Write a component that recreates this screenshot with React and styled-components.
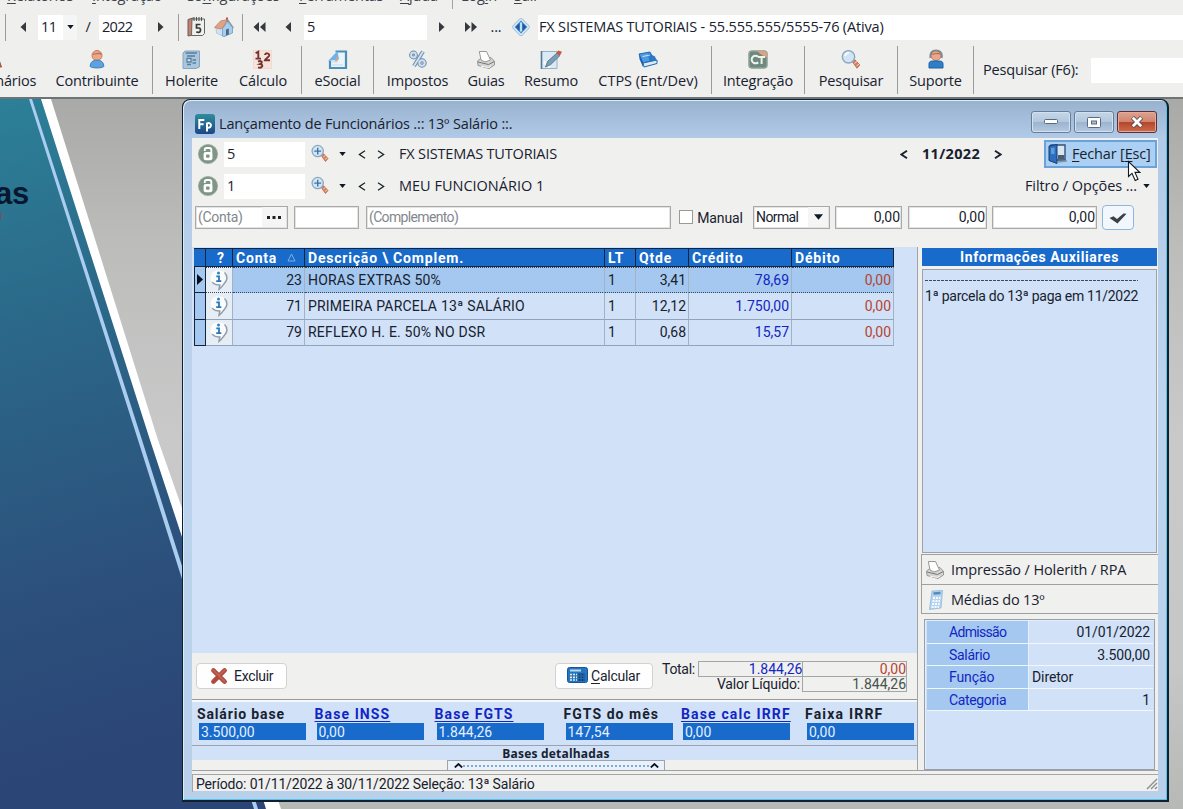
import React from "react";
import styled, { createGlobalStyle, css } from "styled-components";

const Global = createGlobalStyle`
  * { box-sizing: border-box; }
  html, body { margin: 0; padding: 0; overflow: hidden; }
  body { width: 1183px; height: 809px; background: #b8bab8; }
`;

const segoe = `"Open Sans", "Noto Sans", sans-serif`;
const sans = `Roboto, "Liberation Sans", sans-serif`;
const blue = "#186acb";
const pale = "#d0e1f8";

const Screen = styled.div`
  position: relative;
  width: 1183px;
  height: 809px;
  overflow: hidden;
  display: flex;
  flex-direction: column;
`;

const Ui = styled.span`
  font-family: ${segoe};
  font-size: ${(p) => p.$size || 14.5}px;
  letter-spacing: ${(p) => p.$ls ?? -0.17}px;
  font-weight: ${(p) => p.$weight || 400};
  color: #18222e;
  line-height: 20px;
  white-space: pre;
  flex: none;
`;

const Sys = styled.span`
  font-family: ${sans};
  font-size: ${(p) => p.$size || 14}px;
  letter-spacing: ${(p) => p.$ls ?? 0}px;
  font-weight: ${(p) => p.$weight || 400};
  color: ${(p) => p.$color || "#18222e"};
  line-height: 16px;
  white-space: pre;
  flex: none;
`;

const U = styled.span`
  text-decoration: underline;
  text-underline-offset: 2px;
`;

/* ---------- application bars ---------- */
const AppBars = styled.header`
  flex: none;
  height: 99px;
  background: #efefee;
  border-bottom: 2px solid #6e7375;
  display: flex;
  flex-direction: column;
`;

const MenuBar = styled.nav`
  height: 13px;
  display: flex;
  flex: none;
  overflow: hidden;
`;

const MenuItem = styled(Ui)`
  margin-left: ${(p) => p.$ml}px;
  width: ${(p) => p.$w}px;
  margin-top: -14px;
  color: #3c434a;
`;

const MenuSep = styled.i`
  width: 1px;
  height: 9px;
  background: #a3a3a3;
  margin-left: ${(p) => p.$ml}px;
`;

const NavBar = styled.div`
  height: 28px;
  display: flex;
  align-items: center;
  flex: none;
`;

const Slot = styled.div`
  margin-left: ${(p) => p.$ml || 0}px;
  width: ${(p) => p.$w}px;
  height: ${(p) => (p.$h ? `${p.$h}px` : "auto")};
  flex: none;
  display: flex;
  align-items: center;
  justify-content: center;
  svg { display: block; flex: none; }
`;

const Sep = styled.i`
  flex: none;
  width: 1px;
  height: ${(p) => p.$h}px;
  margin-left: ${(p) => p.$ml || 0}px;
  background: #9b9b9b;
`;

const Field = styled.div`
  flex: none;
  margin-left: ${(p) => p.$ml || 0}px;
  width: ${(p) => p.$w}px;
  height: 25px;
  background: #fff;
  padding-left: ${(p) => p.$pad ?? 3}px;
  display: flex;
  align-items: center;
`;

const DropPart = styled.div`
  margin-left: auto;
  width: ${(p) => p.$w || 11}px;
  align-self: stretch;
  background: #f5f5f5;
  display: flex;
  align-items: center;
  justify-content: center;
`;

const ToolBar = styled.div`
  height: 56px;
  display: flex;
  flex: none;
  padding-top: 5px;
`;

const Tool = styled.div`
  width: ${(p) => p.$w}px;
  margin-left: ${(p) => p.$ml || 0}px;
  flex: none;
  display: flex;
  flex-direction: column;
  align-items: center;
  padding-top: 3px;
  svg { display: block; height: 22px; flex: none; }
`;

const SearchBox = styled.div`
  display: flex;
  align-items: center;
  height: 48px;
  padding-left: 9px;
`;

/* ---------- desktop ---------- */
const Desktop = styled.main`
  position: relative;
  flex: 1;
  background: linear-gradient(180deg, #a9a9a8 0, #bcbdbb 20%, #c9c9c9 48%, #c6c7c7 80%, #b6b9b6 100%);
`;

const Wallpaper = styled.svg`
  position: absolute;
  left: 0;
  top: 0;
`;

const Logo = styled.div`
  position: absolute;
  left: -5px;
  top: 77px;
  font: 700 31px/36px "Liberation Sans", sans-serif;
  color: #06182f;
  letter-spacing: -0.3px;
  small {
    position: absolute;
    left: 5px;
    top: 29px;
    font-size: 10px;
    line-height: 22px;
    color: #6d5a6c;
  }
`;

/* ---------- window ---------- */
const Window = styled.section`
  position: absolute;
  left: 182px;
  top: 0;
  width: 987px;
  height: 703px;
  border: 1px solid #10202f;
  border-width: 1px 2px 2px 1px;
  border-radius: 8px 8px 0 0;
  background: linear-gradient(180deg, #98b2ce 0, #b1cae8 38px, #bcd4ee 300px, #b9d0ea 100%);
  box-shadow: inset 1px 1px 0 #d9ecfa, inset -1px -1px 0 #55c4ea;
  padding: 0 9px 9px 9px;
  display: flex;
  flex-direction: column;
`;

const TitleBar = styled.div`
  height: 38px;
  flex: none;
  display: flex;
  align-items: center;
  padding: 10px 1px 0 3px;
`;

const CaptionButtons = styled.div`
  margin-left: auto;
  align-self: flex-start;
  display: flex;
  gap: 3px;
  padding-top: 1px;
`;

const CaptionButton = styled.div`
  width: 40px;
  height: 22px;
  border: 1px solid ${(p) => (p.$close ? "#5b3035" : "#687e98")};
  border-radius: 3px;
  box-shadow: inset 0 0 0 1px ${(p) => (p.$close ? "#e5aa98" : "#d3e2f1")};
  background: ${(p) =>
    p.$close
      ? "linear-gradient(180deg,#dda38f 0,#cf8570 48%,#b3452b 50%,#cd6c4e 100%)"
      : "linear-gradient(180deg,#c5d6e8 0,#b3c8de 48%,#9bb3ce 50%,#b4cae2 100%)"};
  display: flex;
  align-items: center;
  justify-content: center;
`;

const Client = styled.div`
  flex: 1;
  min-height: 0;
  background: #f0f0ef;
  display: flex;
  flex-direction: column;
`;

const LookupRow = styled.div`
  height: ${(p) => p.$h}px;
  flex: none;
  display: flex;
  align-items: center;
  padding-left: 5px;
`;

const LookupEnd = styled.div`
  margin-left: auto;
  display: flex;
  align-items: center;
  padding-right: ${(p) => p.$pr}px;
`;

const CloseAction = styled.div`
  width: 113px;
  height: 28px;
  background: #acd0f3;
  border: 2px solid #6aa2da;
  display: flex;
  align-items: center;
  padding-left: 2px;
  gap: 4px;
`;

const EntryRow = styled.div`
  height: 45px;
  flex: none;
  display: flex;
  align-items: flex-start;
  padding: 4px 0 0 3px;
`;

const Box = styled.div`
  flex: none;
  height: 23px;
  width: ${(p) => p.$w}px;
  margin-left: ${(p) => p.$ml || 0}px;
  background: #fff;
  border: 1px solid #a9a9a9;
  box-shadow: inset 0 0 0 1px #e3e3e3;
  padding: 0 ${(p) => p.$pr ?? 1}px 1px 2px;
  display: flex;
  align-items: center;
  justify-content: ${(p) => (p.$right ? "flex-end" : "flex-start")};
`;

const Check = styled.div`
  flex: none;
  width: 14px;
  height: 14px;
  margin: 4px 0 0 8px;
  background: #fff;
  border: 1px solid #9a9a9a;
`;

const OkButton = styled.div`
  flex: none;
  width: 32px;
  height: 25px;
  margin: -1px 0 0 5px;
  border: 1px solid #8cb8de;
  border-radius: 4px;
  background: #f1f7fc;
  display: flex;
  align-items: center;
  justify-content: center;
`;

const Body = styled.div`
  height: 524px;
  flex: none;
  display: flex;
  border-bottom: 1px solid #a0a0a0;
`;

const LeftPane = styled.div`
  width: 725px;
  flex: none;
  display: flex;
  flex-direction: column;
`;

const GridArea = styled.div`
  height: 406px;
  flex: none;
  background: ${pale};
  padding: 1px 0 0 2px;
`;

const Grid = styled.div`
  width: 700px;
  background: ${pale};
`;

const gridCols = "12px 27px 72px 300px 31px 53px 103px 102px";

const GridHead = styled.div`
  display: grid;
  grid-template-columns: ${gridCols};
  height: 19px;
  background: ${blue};
  border: 1px solid #16243a;
  border-width: 1px 0 1px 0;
`;

const HeadCell = styled.div`
  border-right: 1px solid #16243a;
  padding-left: 3px;
  display: flex;
  align-items: center;
  justify-content: ${(p) => (p.$center ? "center" : "flex-start")};
`;

const GridRow = styled.div`
  display: grid;
  grid-template-columns: ${gridCols};
  height: 26.3px;
  background: ${(p) => (p.$on ? "#a4c8ef" : pale)};
`;

const Cell = styled.div`
  border-right: 1px solid #a2b1c4;
  border-bottom: 1px solid #8fa3bb;
  display: flex;
  align-items: center;
  justify-content: ${(p) => (p.$right ? "flex-end" : "flex-start")};
  padding: 0 2px 0 3px;
  ${(p) =>
    p.$on &&
    css`
      border-bottom: 1px dotted #34485e;
      border-top: 1px dotted #34485e;
    `}
`;

const Marker = styled.div`
  background: #a4c8ef;
  border: 1px solid #16243a;
  border-top: 0;
  display: flex;
  align-items: center;
  justify-content: center;
`;

const InfoCell = styled(Cell)`
  padding: 0;
  justify-content: center;
  background: #e6edf5;
`;

const ActionBar = styled.div`
  height: 47px;
  flex: none;
  display: flex;
  padding: 10px 0 0 4px;
  border-bottom: 1px solid #9a9a9a;
`;

const PushButton = styled.div`
  width: ${(p) => p.$w}px;
  height: 26px;
  flex: none;
  margin-left: ${(p) => p.$ml || 0}px;
  background: #fefefe;
  border: 1px solid #d2d2d2;
  border-radius: 4px;
  display: flex;
  align-items: center;
  padding: 0 0 1px ${(p) => p.$pl}px;
  gap: ${(p) => p.$gap}px;
`;

const Totals = styled.div`
  margin: -2px 0 0 9px;
  width: 245px;
  display: flex;
  flex-direction: column;
`;

const TotalLine = styled.div`
  height: 15.5px;
  display: flex;
  justify-content: flex-end;
  align-items: center;
`;

const TotalBox = styled.div`
  height: 16px;
  width: ${(p) => p.$w}px;
  margin-left: ${(p) => p.$ml || 0}px;
  border: 1px solid #a5a5a5;
  display: flex;
  align-items: center;
  justify-content: flex-end;
`;

const BasesRow = styled.div`
  height: 46px;
  flex: none;
  background: ${pale};
  border-bottom: 1px solid #9aa4b0;
  border-top: 2px solid #f5f8fb;
  display: flex;
  padding: 4px 0 0 5px;
`;

const BaseItem = styled.div`
  width: ${(p) => p.$w}px;
  flex: none;
  display: flex;
  flex-direction: column;
`;

const BaseValue = styled.div`
  margin-left: 2px;
  width: 107px;
  height: 17px;
  margin-top: 1px;
  background: ${blue};
  padding-left: 2px;
  display: flex;
  align-items: center;
`;

const Detail = styled.div`
  height: 14px;
  flex: none;
  background: ${pale};
  display: flex;
  justify-content: center;
  align-items: center;
  padding: 1px 0 0 3px;
`;

const Splitter = styled.div`
  margin-left: 255px;
  width: 218px;
  height: 10px;
  background: #e9f1fa;
  border: 1px solid #9ba4ad;
  border-bottom: 0;
  display: flex;
  align-items: center;
  justify-content: space-between;
  padding: 0 5px 0 6px;
`;

const Dots = styled.i`
  width: 188px;
  height: 2px;
  background: repeating-linear-gradient(90deg, #7fabdc 0 2px, transparent 2px 4px);
`;

const RightPane = styled.aside`
  flex: 1;
  border-left: 1px solid #a3a3a3;
  padding: 1px 0 0 4px;
  display: flex;
  flex-direction: column;
`;

const PaneTitle = styled.div`
  height: 18px;
  width: 235px;
  background: ${blue};
  display: flex;
  align-items: center;
  justify-content: center;
`;

const Memo = styled.div`
  margin-top: 3px;
  width: 235px;
  height: 285px;
  background: ${pale};
  border: 1px solid #9aa2aa;
  padding: 10px 0 0 2px;
  display: flex;
  flex-direction: column;
  gap: 7px;
`;

const MemoRule = styled.i`
  width: 213px;
  height: 1px;
  background: repeating-linear-gradient(90deg, #3f4c5a 0 3px, transparent 3px 4px);
`;

const SideButton = styled.div`
  width: 237px;
  height: 30px;
  flex: none;
  margin: ${(p) => (p.$last ? 0 : 1)}px 0 0 -1px;
  border: 1px solid #a0a0a0;
  border-right: 0;
  border-bottom-width: ${(p) => (p.$last ? 1 : 0)}px;
  display: flex;
  align-items: center;
  padding: ${(p) => (p.$last ? 1 : 0)}px 0 0 3px;
`;

const Facts = styled.div`
  margin: 5px 0 0 2px;
  width: 231px;
  height: 151px;
  background: ${pale};
  border: 1px solid #989fa6;
  box-shadow: inset 1px 1px 0 #e4edf9;
  padding: 1px 1px 0 2px;
`;

const Fact = styled.div`
  display: grid;
  grid-template-columns: 101px 1fr;
  height: 22.5px;
  border-bottom: 1px solid #f2f7fd;
`;

const FactKey = styled.div`
  background: #a4c8ef;
  padding-left: 22px;
  display: flex;
  align-items: center;
`;

const FactValue = styled.div`
  display: flex;
  align-items: center;
  border-left: 1px solid #e8f1fc;
  padding: 0 3px 0 3px;
  justify-content: ${(p) => (p.$right ? "flex-end" : "flex-start")};
`;

const StatusBar = styled.footer`
  margin-top: 3px;
  height: 18px;
  border: 1px solid #a6a6a6;
  border-width: 1px 0 0 1px;
  display: flex;
  align-items: center;
  justify-content: space-between;
  padding: 1px 0 0 3px;
`;

const Pointer = styled.svg`
  position: absolute;
  left: 1127px;
  top: 160px;
`;

/* ---------- drawings ---------- */
const Tri = ({ dir = "right", size = 10, double }) => {
  const w = double ? 13 : 6;
  const p = dir === "right" ? "M0 0L5.5 5L0 10Z" : "M6 0L.5 5L6 10Z";
  return (
    <svg width={w} height={size} viewBox={`0 0 ${w} 10`} fill="#35393d">
      <path d={p} />
      {double && <path d={p} transform="translate(6.5 0)" />}
    </svg>
  );
};

const Down = ({ w = 8, h = 5 }) => (
  <svg width={w} height={h} viewBox="0 0 8 5">
    <path d="M0 0H8L4 5Z" fill="#0c1a28" />
  </svg>
);

const Angle = ({ left, bold }) => (
  <svg width="8" height="9" viewBox="0 0 8 9" fill="none" stroke="#18222e" strokeWidth={bold ? 1.9 : 1.3}>
    <path d={left ? "M7 .8L1.4 4.5L7 8.2" : "M1 .8L6.6 4.5L1 8.2"} />
  </svg>
);

const CalendarIcon = () => (
  <svg width="19" height="22" viewBox="0 0 19 22">
    <path d="M1 3.5L6 2V19L1 20Z" fill="#c9806b" stroke="#655f5f" />
    <path d="M5 3H17.5V17.5L15.5 19.5H4.5Z" fill="#f0f0ec" stroke="#666" />
    <path d="M7 1V5M9.5 1V5M12 1V5M14.5 1V5" stroke="#4f5252" strokeWidth="1.1" />
    <path d="M13.5 8.5H9.5V12H12C14.2 12 14 16.5 11.3 16.3L9.2 16" fill="none" stroke="#333a40" strokeWidth="1.7" />
  </svg>
);

const HomeIcon = () => (
  <svg width="20" height="20" viewBox="0 0 20 20">
    <path d="M12 .5H14V5H12Z" fill="#b15b43" />
    <path d="M2 10.5L11 5L12 18.8L9 19.3L2.5 16Z" fill="#cfe2f4" stroke="#9dbbd4" strokeWidth=".7" />
    <path d="M8.5 11.5L13.5 4.5L18.5 10.5V16L10 19.5L8.5 18.8Z" fill="#a9cdeb" stroke="#5c93bf" strokeWidth=".7" />
    <path d="M.5 10.5L6.5 4L13.5 2.5L9 10.5L6.5 12Z" fill="#dfa287" stroke="#b9785d" strokeWidth=".7" />
    <path d="M13.4 2.3L19.4 11" stroke="#8097aa" strokeWidth="1.3" />
    <path d="M12 12.5L14.8 11.6V17.4L12 18.4Z" fill="#47698a" />
  </svg>
);

const DiamondIcon = () => (
  <svg width="20" height="20" viewBox="0 0 20 20">
    <rect x="3.5" y="3.5" width="13" height="13" rx="2" transform="rotate(45 10 10)" fill="#e2effa" stroke="#a3c2dc" />
    <path d="M10 3.2L16.5 10L10 16.8L3.5 10Z" fill="#4b90cf" />
    <path d="M8.4 6V14L4.8 10ZM11.6 6V14L15.2 10Z" fill="#1d5a9b" />
    <path d="M10 5.5V14.5" stroke="#cfe5f7" strokeWidth="1.8" />
  </svg>
);

const PersonIcon = ({ headset }) => (
  <svg width="16" height="22" viewBox="0 0 16 22">
    <circle cx="8" cy="6.5" r="5" fill="#eaa789" stroke="#c67d5e" />
    <path d="M4 5C6 5.8 10 3 12.3 5.3" fill="none" stroke="#b86e50" strokeWidth="1.2" />
    {headset && <path d="M2.4 9C1.6 3.6 4.4 1.6 8 1.6S14.6 3.6 13.6 9" fill="none" stroke="#84898d" strokeWidth="2" />}
    {headset ? (
      <path d="M1 19V14.5C1 12.5 3 12 5 12H11C13 12 15 12.5 15 14.5V19Z" fill="#2f7fc8" stroke="#1d62a4" />
    ) : (
      <path d="M1.2 17.5C1.2 13 4 11.2 8 11.2S14.8 13 14.8 17.5C13 19.4 3 19.4 1.2 17.5Z" fill="#5ba2de" stroke="#3b7ebb" />
    )}
  </svg>
);

const PersonRedIcon = () => (
  <svg width="18" height="22" viewBox="0 0 18 22">
    <path d="M2 18L9 3L12 5L16.5 18Z" fill="#b9614c" stroke="#a0523f" />
  </svg>
);

const SheetIcon = () => (
  <svg width="19" height="22" viewBox="0 0 19 22">
    <path d="M3 2H17.5V18L14 19.5H1V4Z" fill="#a9c6dd" stroke="#86a5bd" />
    <path d="M3.5 4H15M5 7H13" stroke="#557f9f" strokeWidth="1.7" />
    <path d="M5 9.5H9V13H5ZM10.5 11H14M10.5 14H14M5 15.5H9" stroke="#55809f" strokeWidth="1.3" fill="#d9e7f1" />
  </svg>
);

const NumbersIcon = () => (
  <svg width="20" height="22" viewBox="0 0 20 22" fill="none" stroke="#713431" strokeWidth="1.9">
    <rect x=".5" y="1.5" width="18" height="18" fill="#f8e3dc" stroke="#f5d9d0" strokeWidth="1" />
    <path d="M2.6 4.2L5.3 2.6V9.6M2.5 9.6H8" />
    <path d="M12 6C12 3.7 16.4 3.7 16.2 6.4C16 8.3 13 9 12 11.2H17" />
    <path d="M5 12.6C8 11 10.7 13.4 7 15C11 15.5 9.5 19.6 5 18.4" />
  </svg>
);

const ESocialIcon = () => (
  <svg width="22" height="22" viewBox="0 0 22 22">
    <path d="M8.5 2.5H19V19H3V12" fill="#e9f4fb" stroke="#4c8eb5" strokeWidth="2.2" />
    <path d="M1 12L10.5 2L12 10.5Z" fill="#6db2ec" />
    <path d="M7.5 12.5L10.5 6V12.5Z" fill="#ef9a76" />
    <path d="M5 13H11M5 16H16" stroke="#c4dbe8" />
  </svg>
);

const PercentIcon = () => (
  <svg width="20" height="22" viewBox="0 0 20 22" fill="none">
    <g stroke="#6a8baa" strokeWidth="4"><circle cx="5.5" cy="6" r="2.4" /><circle cx="14" cy="14" r="2.7" /><path d="M15 2.5L6 17" /></g>
    <g stroke="#cfe0ef" strokeWidth="2"><circle cx="5.5" cy="6" r="2.4" /><circle cx="14" cy="14" r="2.7" /><path d="M15 2.5L6 17" /></g>
  </svg>
);

const PrinterIcon = () => (
  <svg width="20" height="22" viewBox="0 0 20 22" stroke="#989898" strokeWidth="1">
    <path d="M1.5 12L6 8.5H15L18.5 12.5V16L13 19.5L2 16.5Z" fill="#d4d4d2" />
    <path d="M5 11L3.3 2.5H10.5L14.5 11L9 13Z" fill="#fff" />
    <path d="M2 13L12.5 15.5L18.3 12.5" fill="none" stroke="#777" />
    <path d="M5 17.2L12.5 18.5L15 17" fill="none" stroke="#f9f9f9" />
  </svg>
);

const NoteIcon = () => (
  <svg width="22" height="22" viewBox="0 0 22 22">
    <path d="M1.5 2.5H17V19.5H1.5Z" fill="#dceaf5" stroke="#94b1c7" />
    <path d="M1.5 2V20" stroke="#527b98" strokeWidth="1.6" />
    <path d="M4 13L10 18" stroke="#fff" strokeWidth="3" />
    <path d="M5.5 18L7.5 12.5L17 4L20 6.5L10.5 15.8Z" fill="#7b9db8" stroke="#4d6b84" strokeWidth=".8" />
    <path d="M16 4.2L18.2 1.5L22 2.8L20 6.6Z" fill="#c95844" />
  </svg>
);

const BookIcon = () => (
  <svg width="20" height="22" viewBox="0 0 20 22">
    <path d="M1 5L12 3L16 11L5 14Z" fill="#4d9be2" stroke="#2169b1" />
    <path d="M1 5L5 14V18L1.5 10Z" fill="#1b5da5" />
    <path d="M5 14L19 11V14.5L6 18Z" fill="#dbeaf6" stroke="#2467ab" />
    <path d="M10 4L17 7.5L18.5 11L11.5 13" fill="#2c78c2" />
    <path d="M4.5 7.5L12 6" stroke="#c5e1fb" />
  </svg>
);

const CtIcon = () => (
  <svg width="20" height="22" viewBox="0 0 20 22">
    <rect x=".5" y="1.5" width="19" height="18" rx="3" fill="#6e8a7c" />
    <path d="M8 1.5H16.5Q19.5 1.5 19.5 5V9L14 6Z" fill="#e3a083" />
    <rect x="1" y="2" width="18" height="17" rx="3" fill="none" stroke="#9aaba1" />
    <path d="M10 7.5C6 5.5 3.5 8 3.7 11S7 15.3 10.3 13.5M10 8H17M13.6 8V15" fill="none" stroke="#eef4f0" strokeWidth="2" />
  </svg>
);

const LensIcon = ({ plus, h = 22 }) => (
  <svg width="20" height={h} viewBox="0 0 20 22">
    <path d="M11 12.2L14 10.8L18.8 16L16 19.2Z" fill="#d9805f" stroke="#b35e42" strokeWidth=".8" />
    <path d="M13.5 14.5L16 12.5M15.5 17L18 15" stroke="#f6d7c9" />
    <circle cx="7.5" cy="7.8" r="6.2" fill="#cfe5f6" stroke="#8da6bd" strokeWidth="1.4" />
    {plus ? (
      <path d="M7.5 4V11.6M3.7 7.8H11.3" stroke="#3d73a5" strokeWidth="1.5" />
    ) : (
      <path d="M4 7A4 4 0 0 1 8 3.8" stroke="#fff" strokeWidth="1.6" fill="none" />
    )}
  </svg>
);

const LockIcon = () => (
  <svg width="20" height="20" viewBox="0 0 20 20">
    <circle cx="10" cy="10" r="9.6" fill="#7f9585" stroke="#93a698" strokeWidth=".7" />
    <path d="M6.8 7V5.6C6.8 4.6 7.6 4 8.6 4H11.4C12.5 4 13.3 4.7 13.3 5.7V15" fill="none" stroke="#fff" strokeWidth="1.9" />
    <rect x="5.6" y="8" width="8.7" height="8.2" rx="2" fill="#fff" />
    <rect x="8" y="10.6" width="3.6" height="3.2" rx="1" fill="#7f9585" />
  </svg>
);

const FpIcon = () => (
  <svg width="20" height="20" viewBox="0 0 20 20">
    <defs>
      <linearGradient id="fp" x1="0" y1="0" x2="0" y2="1">
        <stop offset="0" stopColor="#2f8d9b" />
        <stop offset="1" stopColor="#1c4888" />
      </linearGradient>
    </defs>
    <rect width="20" height="20" rx="3" fill="url(#fp)" />
    <path d="M4.3 15V6H9.3M4.3 10.3H8.6M12 17.5V8.7M12 9.5C16.7 7.5 17.6 14 12.5 13.8" fill="none" stroke="#fff" strokeWidth="2" />
  </svg>
);

const InfoIcon = () => (
  <svg width="20" height="22" viewBox="0 0 20 22">
    <path d="M8.5 1.2C13.5 .8 17.6 3.8 17.8 8C18 12 15 14.5 13 17.5L10 20.3L10.6 16C5 16.4 1.5 13.2 1.5 8.8C1.5 4.6 4.6 1.5 8.5 1.2Z" fill="#fbfcfd" />
    <path d="M15.5 3.5C19.2 7 18.3 11.5 15.5 14.2C14 15.8 12.6 18.6 10 20.3L10.8 16C7.5 16.3 5 15.2 3.2 13.3" fill="none" stroke="#929da9" strokeWidth="1.5" />
    <circle cx="9.5" cy="4" r="1.5" fill="#2d83c4" />
    <path d="M7.3 7.3H10V12M7.2 12.2H12.3" fill="none" stroke="#2778bb" strokeWidth="1.8" />
  </svg>
);

const DoorIcon = () => (
  <svg width="20" height="20" viewBox="0 0 20 20">
    <path d="M3 1H17V16H3Z" fill="#d9e6ef" stroke="#32517a" strokeWidth="1.4" />
    <path d="M10 11H16.3V15.5H10Z" fill="#4b5d70" />
    <path d="M1 2L9 .5V19.5L1 16.5Z" fill="#2a6ebd" stroke="#173b75" />
    <path d="M3 4L6.5 3.5V10L3 10Z" fill="#609bd9" />
    <path d="M9.5 18L19 17" stroke="#8196a8" strokeWidth="1.3" />
  </svg>
);

const CheckIcon = () => (
  <svg width="18" height="14" viewBox="0 0 18 14">
    <path d="M.5 7L4.5 5.2L8 8L14.5 2.5L17.5 2.8L8.5 12.5Z" fill="#3b4146" />
  </svg>
);

const DeleteIcon = () => (
  <svg width="18" height="18" viewBox="0 0 18 18">
    <path d="M3.4 3.4L14.6 14.6M14.6 3.4L3.4 14.6" stroke="#b04a3f" strokeWidth="4.6" strokeLinecap="round" />
    <path d="M3.2 3L14.6 14.4M14.8 3L8.8 8.8" stroke="#c2685b" strokeWidth="1.4" strokeLinecap="round" />
  </svg>
);

const CalcIcon = () => (
  <svg width="21" height="17" viewBox="0 0 21 17">
    <rect x=".5" y=".5" width="20" height="15" rx="2" fill="#2474c2" stroke="#17549a" />
    <path d="M3 3.5H14" stroke="#bcd9e6" strokeWidth="2" />
    <path d="M3 7.5H10M3 10.3H10M3 13H10" stroke="#e6efdb" strokeWidth="1.7" strokeDasharray="2 1" />
    <path d="M11.5 7.5H18M11.5 10.3H18M11.5 13H18" stroke="#183a60" strokeWidth="1.8" strokeDasharray="2 1" />
  </svg>
);

const PadIcon = () => (
  <svg width="14" height="20" viewBox="0 0 14 20">
    <path d="M3 1L13.5 .5L12 18L.5 19.5Z" fill="#b4d4f1" stroke="#92b8d9" strokeWidth=".8" />
    <path d="M4.5 3.5L11.5 3" stroke="#568ab8" strokeWidth="2.4" />
    <path d="M4 8H11.5M3.5 11H11M3 14H10.6M2.6 17H10" stroke="#f4faff" strokeWidth="1.8" strokeDasharray="2 1" />
  </svg>
);

const UpMark = () => (
  <svg width="9" height="5" viewBox="0 0 9 5">
    <path d="M.8 4.5L4.5 1L8.2 4.5" fill="none" stroke="#0b1520" strokeWidth="1.8" />
  </svg>
);

/* ---------- data ---------- */
const tools = [
  { t: "Funcionários", w: 96, ml: -54, I: PersonRedIcon },
  { t: "Contribuinte", w: 110, ml: 0, I: PersonIcon, sep: 1 },
  { t: "Holerite", w: 77, I: SheetIcon },
  { t: "Cálculo", w: 66, I: NumbersIcon, sep: 6 },
  { t: "eSocial", w: 71, I: ESocialIcon, sep: 1 },
  { t: "Impostos", w: 87, I: PercentIcon },
  { t: "Guias", w: 50, I: PrinterIcon },
  { t: "Resumo", w: 80, I: NoteIcon },
  { t: "CTPS (Ent/Dev)", w: 114, I: BookIcon, sep: 7, ls: 0 },
  { t: "Integração", w: 92, I: CtIcon, sep: 1 },
  { t: "Pesquisar", w: 92, I: LensIcon, sep: 1 },
  { t: "Suporte", w: 75, I: () => <PersonIcon headset />, sep: 1 },
];

const entries = [
  ["23", "HORAS EXTRAS 50%", "1", "3,41", "78,69", "0,00"],
  ["71", "PRIMEIRA PARCELA 13ª SALÁRIO", "1", "12,12", "1.750,00", "0,00"],
  ["79", "REFLEXO H. E. 50% NO DSR", "1", "0,68", "15,57", "0,00"],
];

const bases = [
  { t: "Salário base", v: "3.500,00", w: 117.5, ls: 0.85 },
  { t: "Base INSS", v: "0,00", w: 120, ls: 1.1, link: true },
  { t: "Base FGTS", v: "1.844,26", w: 129, ls: 1.1, link: true },
  { t: "FGTS do mês", v: "147,54", w: 117.5, ls: 1.05 },
  { t: "Base calc IRRF", v: "0,00", w: 124, ls: 1.15, link: true },
  { t: "Faixa IRRF", v: "0,00", w: 110, ls: 1.2 },
];

const facts = [
  ["Admissão", "01/01/2022", true, -0.7],
  ["Salário", "3.500,00", true, -0.3],
  ["Função", "Diretor", false, -0.1],
  ["Categoria", "1", true, -0.35],
];

const ink = "#1226c4";
const red = "#b8432f";

const Lookup = ({ code, name, ls }) => (
  <>
    <Slot $w={21}><LockIcon /></Slot>
    <Field $ml={6} $w={81}><Ui>{code}</Ui></Field>
    <Slot $ml={5} $w={20}><LensIcon plus h={20} /></Slot>
    <Slot $ml={8} $w={8}><Down w={7} h={4} /></Slot>
    <Slot $ml={12} $w={8}><Angle left /></Slot>
    <Slot $ml={11} $w={8}><Angle /></Slot>
    <Slot $ml={14}><Ui $ls={ls}>{name}</Ui></Slot>
  </>
);

export default function App() {
  return (
    <Screen>
      <Global />
      <AppBars>
        <MenuBar>
          <MenuItem $ml={7} $w={66}><U>R</U>elatórios</MenuItem>
          <MenuItem $ml={19} $w={70}><U>I</U>ntegração</MenuItem>
          <MenuItem $ml={23} $w={95}>Co<U>n</U>figurações</MenuItem>
          <MenuItem $ml={19} $w={82}><U>F</U>erramentas</MenuItem>
          <MenuItem $ml={19} $w={40}><U>A</U>juda</MenuItem>
          <MenuSep $ml={12} />
          <MenuItem $ml={8} $w={39}>Log<U>i</U>n</MenuItem>
          <MenuItem $ml={14} $w={24}><U>S</U>air</MenuItem>
        </MenuBar>
        <NavBar>
          <Sep $ml={5} $h={27} />
          <Slot $ml={14} $w={6}><Tri dir="left" /></Slot>
          <Field $ml={12} $w={39}><Ui $ls={-0.6}>11</Ui><DropPart $w={14}><Down w={7} h={4} /></DropPart></Field>
          <Slot $ml={7} $w={8}><Ui>/</Ui></Slot>
          <Field $ml={7} $w={47}><Ui $ls={-0.7}>2022</Ui></Field>
          <Slot $ml={12} $w={6}><Tri /></Slot>
          <Sep $ml={14} $h={27} />
          <Slot $ml={8} $w={19}><CalendarIcon /></Slot>
          <Slot $ml={8} $w={20}><HomeIcon /></Slot>
          <Sep $ml={8} $h={27} />
          <Slot $ml={10} $w={13}><Tri dir="left" double /></Slot>
          <Slot $ml={19} $w={6}><Tri dir="left" /></Slot>
          <Field $ml={13} $w={123}><Ui>5</Ui></Field>
          <Slot $ml={12} $w={6}><Tri /></Slot>
          <Slot $ml={20} $w={13}><Tri double /></Slot>
          <Slot $ml={12} $w={12}><Ui>...</Ui></Slot>
          <Slot $ml={9} $w={20}><DiamondIcon /></Slot>
          <Field $ml={7} $w={646} $pad={1}><Ui>FX SISTEMAS TUTORIAIS - 55.555.555/5555-76 (Ativa)</Ui></Field>
        </NavBar>
        <ToolBar>
          {tools.map(({ t, w, ml, I, sep, ls }) => (
            <React.Fragment key={t}>
              <Tool $w={w} $ml={ml}><I /><Ui $ls={ls}>{t}</Ui></Tool>
              {sep && <Sep $ml={sep - 1} $h={48} />}
            </React.Fragment>
          ))}
          <SearchBox>
            <Ui>Pesquisar (F6):</Ui>
            <Field $ml={13} $w={100} />
          </SearchBox>
        </ToolBar>
      </AppBars>

      <Desktop>
        <Wallpaper width="300" height="710" viewBox="0 0 300 710">
          <defs>
            <linearGradient id="sea" gradientUnits="userSpaceOnUse" x1="0" y1="0" x2="190" y2="640">
              <stop offset="0" stopColor="#2c8098" />
              <stop offset=".35" stopColor="#2b6788" />
              <stop offset=".75" stopColor="#2c4f7b" />
              <stop offset="1" stopColor="#2b4577" />
            </linearGradient>
          </defs>
          <path d="M0 0H45L155 341L270 710H0Z" fill="url(#sea)" />
          <path d="M41 0H51L158 341L183 412L281 710H266L182 438L150 341Z" fill="#fff" />
          <path d="M29 0H32L142 341L182 467L258 710H254L182 480L138 341Z" fill="#abcdf0" />
        </Wallpaper>
        <Logo>as<small>r</small></Logo>

        <Window>
          <TitleBar>
            <FpIcon />
            <Slot $ml={4}><Ui>Lançamento de Funcionários .:: 13º Salário ::.</Ui></Slot>
            <CaptionButtons>
              <CaptionButton>
                <svg width="14" height="6"><rect x=".5" y=".5" width="13" height="4" rx="1" fill="#fff" stroke="#566a82" /></svg>
              </CaptionButton>
              <CaptionButton>
                <svg width="14" height="11"><rect x=".5" y=".5" width="13" height="10" rx="1" fill="#fff" stroke="#566a82" /><rect x="4.5" y="4" width="5" height="3" fill="#a9bfd6" stroke="#566a82" /></svg>
              </CaptionButton>
              <CaptionButton $close>
                <svg width="14" height="12" viewBox="0 0 14 12"><path d="M2.5 1.5L11.5 10.5M11.5 1.5L2.5 10.5" stroke="#57454c" strokeWidth="4.4" /><path d="M2.8 1.8L11.2 10.2M11.2 1.8L2.8 10.2" stroke="#fff" strokeWidth="2.8" /></svg>
              </CaptionButton>
            </CaptionButtons>
          </TitleBar>

          <Client>
            <LookupRow $h={32}>
              <Lookup code="5" name="FX SISTEMAS TUTORIAIS" />
              <LookupEnd $pr={1}>
                <Angle left bold />
                <Slot $ml={12} $w={62}><Ui $weight={700} $ls={0.35}>11/2022</Ui></Slot>
                <Slot $ml={12} $w={8}><Angle bold /></Slot>
                <Slot $ml={42} $w={113}>
                  <CloseAction><DoorIcon /><Ui><U>F</U>echar [<U>E</U>sc]</Ui></CloseAction>
                </Slot>
              </LookupEnd>
            </LookupRow>
            <LookupRow $h={32}>
              <Lookup code="1" name="MEU FUNCIONÁRIO 1" ls={0} />
              <LookupEnd $pr={8}>
                <Ui $ls={-0.08}>Filtro / Opções ...</Ui>
                <Slot $ml={5} $w={8}><Down w={7} h={4} /></Slot>
              </LookupEnd>
            </LookupRow>
            <EntryRow>
              <Box $w={93}>
                <Sys $color="#83888e" $ls={-0.3}>(Conta)</Sys>
                <DropPart $w={24}><svg width="14" height="3"><path d="M0 0H3V3H0ZM5.5 0H8.5V3H5.5ZM11 0H14V3H11Z" fill="#222" /></svg></DropPart>
              </Box>
              <Box $ml={6} $w={65} />
              <Box $ml={7} $w={305}><Sys $color="#83888e" $ls={-0.65}>(Complemento)</Sys></Box>
              <Check />
              <Slot $ml={4} $w={46} $h={23}><Sys $ls={-0.15}>Manual</Sys></Slot>
              <Box $ml={10} $w={77}><Sys $ls={-0.6}>Normal</Sys><DropPart $w={20}><Down w={9} h={6} /></DropPart></Box>
              <Box $ml={5} $w={67} $right><Sys>0,00</Sys></Box>
              <Box $ml={6} $w={79} $right><Sys>0,00</Sys></Box>
              <Box $ml={5} $w={105} $right><Sys>0,00</Sys></Box>
              <OkButton><CheckIcon /></OkButton>
            </EntryRow>

            <Body>
              <LeftPane>
                <GridArea>
                  <Grid>
                    <GridHead>
                      <HeadCell />
                      <HeadCell $center><Sys $weight={700} $color="#fff">?</Sys></HeadCell>
                      <HeadCell>
                        <Sys $weight={700} $color="#fff" $ls={0.8}>Conta</Sys>
                        <Slot $ml={9} $w={10}><svg width="9" height="9"><path d="M4.5 1L8 8H1Z" fill="none" stroke="#7fb0e8" /></svg></Slot>
                      </HeadCell>
                      {["Descrição \\ Complem.", "LT", "Qtde", "Crédito", "Débito"].map((h) => (
                        <HeadCell key={h}><Sys $weight={700} $color="#fff" $ls={0.8}>{h}</Sys></HeadCell>
                      ))}
                    </GridHead>
                    {entries.map(([c, d, lt, q, cr, db], i) => {
                      const on = i === 0;
                      return (
                        <GridRow key={c} $on={on}>
                          <Marker>{on && <svg width="6" height="11"><path d="M0 0L6 5.5L0 11Z" fill="#06101c" /></svg>}</Marker>
                          <InfoCell $on={on}><InfoIcon /></InfoCell>
                          <Cell $on={on} $right><Sys>{c}</Sys></Cell>
                          <Cell $on={on}><Sys $ls={0.2}>{d}</Sys></Cell>
                          <Cell $on={on}><Sys>{lt}</Sys></Cell>
                          <Cell $on={on} $right><Sys>{q}</Sys></Cell>
                          <Cell $on={on} $right><Sys $color={ink}>{cr}</Sys></Cell>
                          <Cell $on={on} $right><Sys $color={red}>{db}</Sys></Cell>
                        </GridRow>
                      );
                    })}
                  </Grid>
                </GridArea>
                <ActionBar>
                  <PushButton $w={91} $pl={13} $gap={6}><DeleteIcon /><Sys $ls={-0.3}>Excluir</Sys></PushButton>
                  <PushButton $ml={268} $w={98} $pl={11} $gap={3}><CalcIcon /><Sys $ls={-0.25}><U>C</U>alcular</Sys></PushButton>
                  <Totals>
                    <TotalLine>
                      <Sys $ls={-0.3}>Total:</Sys>
                      <TotalBox $ml={3} $w={106}><Sys $color={ink}>1.844,26</Sys></TotalBox>
                      <TotalBox $ml={-1} $w={105}><Sys $color={red}>0,00</Sys></TotalBox>
                    </TotalLine>
                    <TotalLine>
                      <Sys $ls={-0.15}>Valor Líquido:</Sys>
                      <TotalBox $ml={2} $w={105}><Sys $color="#46544b">1.844,26</Sys></TotalBox>
                    </TotalLine>
                  </Totals>
                </ActionBar>
                <BasesRow>
                  {bases.map((b) => (
                    <BaseItem key={b.t} $w={b.w}>
                      <Sys $weight={700} $ls={b.ls} $color={b.link ? ink : undefined}>{b.link ? <U>{b.t}</U> : b.t}</Sys>
                      <BaseValue><Sys $color="#e4f0ff">{b.v}</Sys></BaseValue>
                    </BaseItem>
                  ))}
                </BasesRow>
                <Detail><Ui $size={12} $weight={700} $ls={0.2}>Bases detalhadas</Ui></Detail>
                <Splitter><UpMark /><Dots /><UpMark /></Splitter>
              </LeftPane>

              <RightPane>
                <PaneTitle><Sys $weight={700} $color="#fff" $ls={0.6}>Informações Auxiliares</Sys></PaneTitle>
                <Memo>
                  <MemoRule />
                  <Sys $ls={-0.28}>1ª parcela do 13ª paga em 11/2022</Sys>
                </Memo>
                <SideButton><PrinterIcon /><Slot $ml={6}><Ui $ls={-0.12}>Impressão / Holerith / RPA</Ui></Slot></SideButton>
                <SideButton $last><Slot $ml={3} $w={16}><PadIcon /></Slot><Slot $ml={7}><Ui>Médias do 13º</Ui></Slot></SideButton>
                <Facts>
                  {facts.map(([k, v, right, ls]) => (
                    <Fact key={k}>
                      <FactKey><Sys $color={ink} $ls={ls}>{k}</Sys></FactKey>
                      <FactValue $right={right}><Sys $ls={-0.1}>{v}</Sys></FactValue>
                    </Fact>
                  ))}
                </Facts>
              </RightPane>
            </Body>
            <StatusBar>
              <Sys $ls={-0.16}>Período: 01/11/2022 à 30/11/2022 Seleção: 13ª Salário</Sys>
              <svg width="12" height="12"><path d="M1 11L11 1M5 11L11 5M9 11L11 9" stroke="#8d8d8d" strokeWidth="1.4" /></svg>
            </StatusBar>
          </Client>
        </Window>
      </Desktop>
      <Pointer width="14" height="22" viewBox="0 0 14 22">
        <path d="M1.5 1.5V16.5L5 13.3L8.2 20.5L11 19.2L8 12.4H12.8Z" fill="#fff" stroke="#101820" strokeWidth="1.1" />
      </Pointer>
    </Screen>
  );
}
